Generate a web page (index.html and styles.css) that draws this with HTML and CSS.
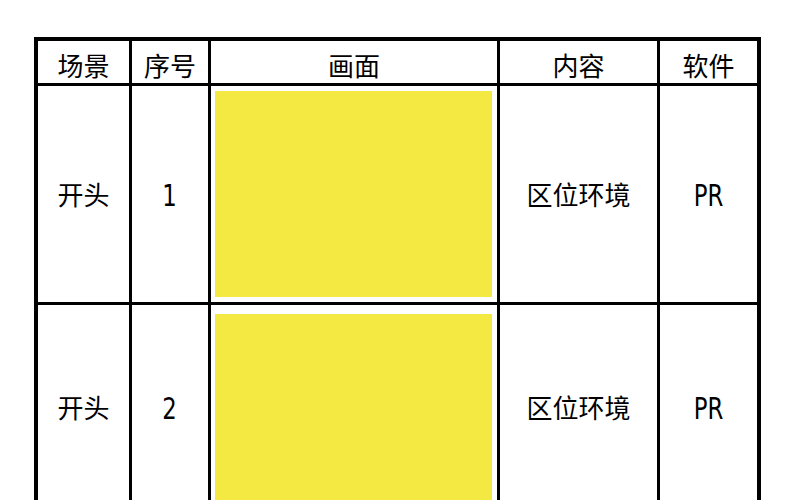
FILE: index.html
```html
<!DOCTYPE html>
<html lang="zh">
<head>
<meta charset="utf-8">
<title>分镜表</title>
<link rel="stylesheet" href="styles.css">
</head>
<body>
<div class="sheet">
  <div class="cell head">场景</div>
  <div class="cell head">序号</div>
  <div class="cell head">画面</div>
  <div class="cell head">内容</div>
  <div class="cell head">软件</div>

  <div class="cell">开头</div>
  <div class="cell"><span class="latin">1</span></div>
  <div class="cell pic"><div class="frame"></div></div>
  <div class="cell">区位环境</div>
  <div class="cell"><span class="latin">PR</span></div>

  <div class="cell">开头</div>
  <div class="cell"><span class="latin">2</span></div>
  <div class="cell pic pic2"><div class="frame"></div></div>
  <div class="cell">区位环境</div>
  <div class="cell"><span class="latin">PR</span></div>
</div>
</body>
</html>
```
FILE: styles.css
```css
html, body {
  margin: 0;
  padding: 0;
  background: #ffffff;
  overflow: hidden;
}
body {
  padding: 37px 0 0 34px;
  font-family: "Noto Sans CJK SC", "Noto Sans", sans-serif;
  color: #000;
}
.sheet {
  display: grid;
  grid-template-columns: 91px 76px 286px 157px 97px;
  grid-template-rows: 42px 216px 204px;
  gap: 3px;
  padding: 4px;
  background: #000;
  width: max-content;
}
.cell {
  background: #fff;
  display: flex;
  align-items: center;
  justify-content: center;
  font-size: 26px;
  line-height: 1;
}
.head {
  padding-top: 6px;
}
.latin {
  display: inline-block;
  font-family: "DejaVu Sans", sans-serif;
  font-size: 30px;
  font-weight: 400;
  transform: scaleX(0.76);
  padding-top: 4px;
}
.pic {
  align-items: stretch;
  justify-content: stretch;
  padding: 5px 5px 5px 4px;
}
.pic2 {
  padding-top: 9px;
}
.frame {
  flex: 1;
  background: #f4e842;
}
```
